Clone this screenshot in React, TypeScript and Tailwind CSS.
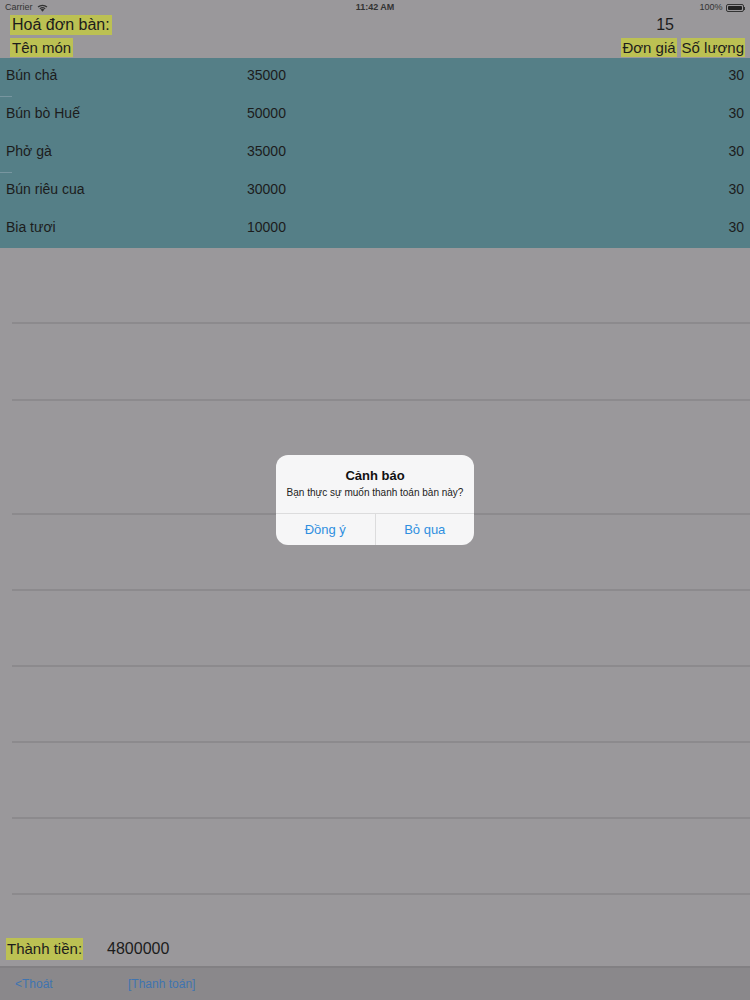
import React from "react";

interface Item {
  ten: string;
  gia: number;
  soLuong: number;
}

const items: Item[] = [
  { ten: "Bún chả", gia: 35000, soLuong: 30 },
  { ten: "Bún bò Huế", gia: 50000, soLuong: 30 },
  { ten: "Phở gà", gia: 35000, soLuong: 30 },
  { ten: "Bún riêu cua", gia: 30000, soLuong: 30 },
  { ten: "Bia tươi", gia: 10000, soLuong: 30 },
];

const font = { fontFamily: "'Liberation Sans', Arial, sans-serif" };

function Wifi() {
  return (
    <svg width="11" height="8" viewBox="0 0 11 8" className="ml-[4px]">
      <path d="M5.5 7.8 L3.6 5.6 A2.8 2.8 0 0 1 7.4 5.6 Z" fill="#333" />
      <path d="M2.4 4.4 A4.6 4.6 0 0 1 8.6 4.4 L7.8 5.2 A3.5 3.5 0 0 0 3.2 5.2 Z" fill="#333" />
      <path d="M0.6 2.6 A7.2 7.2 0 0 1 10.4 2.6 L9.5 3.5 A6 6 0 0 0 1.5 3.5 Z" fill="#333" />
    </svg>
  );
}

function Battery() {
  return (
    <div className="flex items-center ml-[3px]">
      <div className="w-[18px] h-[8px] border border-[#333] rounded-[2px] p-[1px]">
        <div className="w-full h-full bg-[#222] rounded-[1px]" />
      </div>
      <div className="w-[1.5px] h-[3px] bg-[#333]" />
    </div>
  );
}

export default function App() {
  return (
    <div className="w-[750px] h-[1000px] bg-[#9a989b] relative flex flex-col text-[#1c1c1c]" style={font}>
      {/* Status bar */}
      <div className="h-[16px] flex items-center justify-between px-[5px] text-[9px] text-[#333]">
        <div className="flex items-center w-[120px]">
          Carrier
          <Wifi />
        </div>
        <div className="font-semibold">11:42 AM</div>
        <div className="flex items-center justify-end w-[120px]">
          100%
          <Battery />
        </div>
      </div>

      {/* Header */}
      <div className="h-[20px] flex items-center justify-between pl-[10px] pr-[76px] mt-[-1px]">
        <span className="bg-[#bcc153] px-[2px] text-[16px] leading-[20px]">Hoá đơn bàn:</span>
        <span className="text-[16px] leading-[20px]">15</span>
      </div>
      <div className="h-[22px] flex items-end justify-between pl-[10px] pr-[5px] text-[15px]">
        <span className="bg-[#bcc153] px-[2px] leading-[19px]">Tên món</span>
        <div className="flex gap-[4px]">
          <span className="bg-[#bcc153] px-[1px] leading-[19px]">Đơn giá</span>
          <span className="bg-[#bcc153] px-[1px] leading-[19px]">Số lượng</span>
        </div>
      </div>

      {/* Rows */}
      <div className="bg-[#557f87] mt-[1px]">
        {items.map((it, i) => (
          <div key={i} className="h-[38px] flex items-center px-[6px] pb-[4px] text-[14px] relative">
            {i % 2 === 1 && <div className="absolute left-0 top-0 w-[12px] h-[1px] bg-[#7896a0]" />}
            <span className="w-[241px]">{it.ten}</span>
            <span className="flex-1">{it.gia}</span>
            <span>{it.soLuong}</span>
          </div>
        ))}
      </div>

      {/* Empty rows */}
      <div className="flex-1 flex flex-col">
        <div className="mt-[74px] ml-[12px] h-[2px] bg-[#8c8a8d]" />
        <div className="mt-[75px] ml-[12px] h-[2px] bg-[#8c8a8d]" />
        <div className="mt-[112px] ml-[12px] h-[2px] bg-[#8c8a8d]" />
        <div className="mt-[74px] ml-[12px] h-[2px] bg-[#8c8a8d]" />
        <div className="mt-[74px] ml-[12px] h-[2px] bg-[#8c8a8d]" />
        <div className="mt-[74px] ml-[12px] h-[2px] bg-[#8c8a8d]" />
        <div className="mt-[74px] ml-[12px] h-[2px] bg-[#8c8a8d]" />
        <div className="mt-[74px] ml-[12px] h-[2px] bg-[#8c8a8d]" />
      </div>

      {/* Total */}
      <div className="h-[30px] flex items-center pl-[6px] text-[15px] mb-[2px]">
        <span className="bg-[#bcc153] px-[1px] leading-[22px]">Thành tiền:</span>
        <span className="ml-[24px] text-[16px]">4800000</span>
      </div>

      {/* Toolbar */}
      <div className="h-[34px] bg-[#8a888b] border-t-[2px] border-[#828083] flex items-center text-[12px] text-[#3f74b0]">
        <span className="ml-[15px] w-[113px]">&lt;Thoát</span>
        <span>[Thanh toán]</span>
      </div>

      {/* Alert */}
      <div className="absolute left-[276px] top-[455px] w-[198px] h-[90px] bg-[#f6f6f7] rounded-[12px] flex flex-col overflow-hidden">
        <div className="flex flex-col items-center pt-[14px] h-[58px]">
          <div className="text-[13px] font-bold leading-[14px] text-[#111]">Cảnh báo</div>
          <div className="text-[10px] leading-[12px] mt-[4px] text-[#222]">Bạn thực sự muốn thanh toán bàn này?</div>
        </div>
        <div className="flex-1 flex border-t border-[#dcdcdd] text-[13px] text-[#2f8fe0]">
          <div className="flex-1 flex items-center justify-center border-r border-[#dcdcdd]">Đồng ý</div>
          <div className="flex-1 flex items-center justify-center">Bỏ qua</div>
        </div>
      </div>
    </div>
  );
}
